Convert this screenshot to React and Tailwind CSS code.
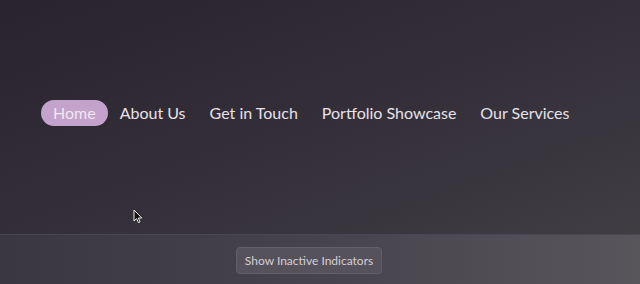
import React from "react";

const links = ["Home", "About Us", "Get in Touch", "Portfolio Showcase", "Our Services"];

function Cursor() {
  return (
    <svg width="10" height="15" viewBox="0 0 10 15" className="absolute left-[133px] top-[209px]">
      <path d="M1 1 L1 12 L3.6 9.6 L5.4 13.6 L7 12.9 L5.3 9 L8.8 9 Z" fill="#111" stroke="#eee" strokeWidth="1" />
    </svg>
  );
}

export default function App() {
  return (
    <div
      className="relative w-[640px] h-[284px] overflow-hidden flex flex-col"
      style={{ fontFamily: "Lato, 'Noto Sans', sans-serif" }}
    >
      {/* Nav area */}
      <div className="h-[234px] flex items-center bg-gradient-to-br from-[#29232f] via-[#332e38] to-[#403d43] pl-[41px] pb-[8px]">
        <nav className="flex items-center">
          {links.map((label, i) => (
            <a
              key={label}
              className={
                i === 0
                  ? "px-3 h-[26px] flex items-center rounded-full bg-[#c3a3cb] text-[#f1e6f2] text-[16px]"
                  : "px-3 h-[26px] flex items-center text-[#e6e2e9] text-[16px]"
              }
            >
              {label}
            </a>
          ))}
        </nav>
      </div>

      {/* Bottom bar */}
      <div className="h-[50px] border-t border-[#4b4751] bg-gradient-to-r from-[#3b3741] via-[#47434c] to-[#58555b] flex justify-center pr-[22px] pt-[12px]">
        <button className="h-[27px] px-[8px] rounded-[4px] bg-[#56525c] border border-[#635f68] text-[#d3cfd6] text-[12px]">
          Show Inactive Indicators
        </button>
      </div>

      <Cursor />
    </div>
  );
}
